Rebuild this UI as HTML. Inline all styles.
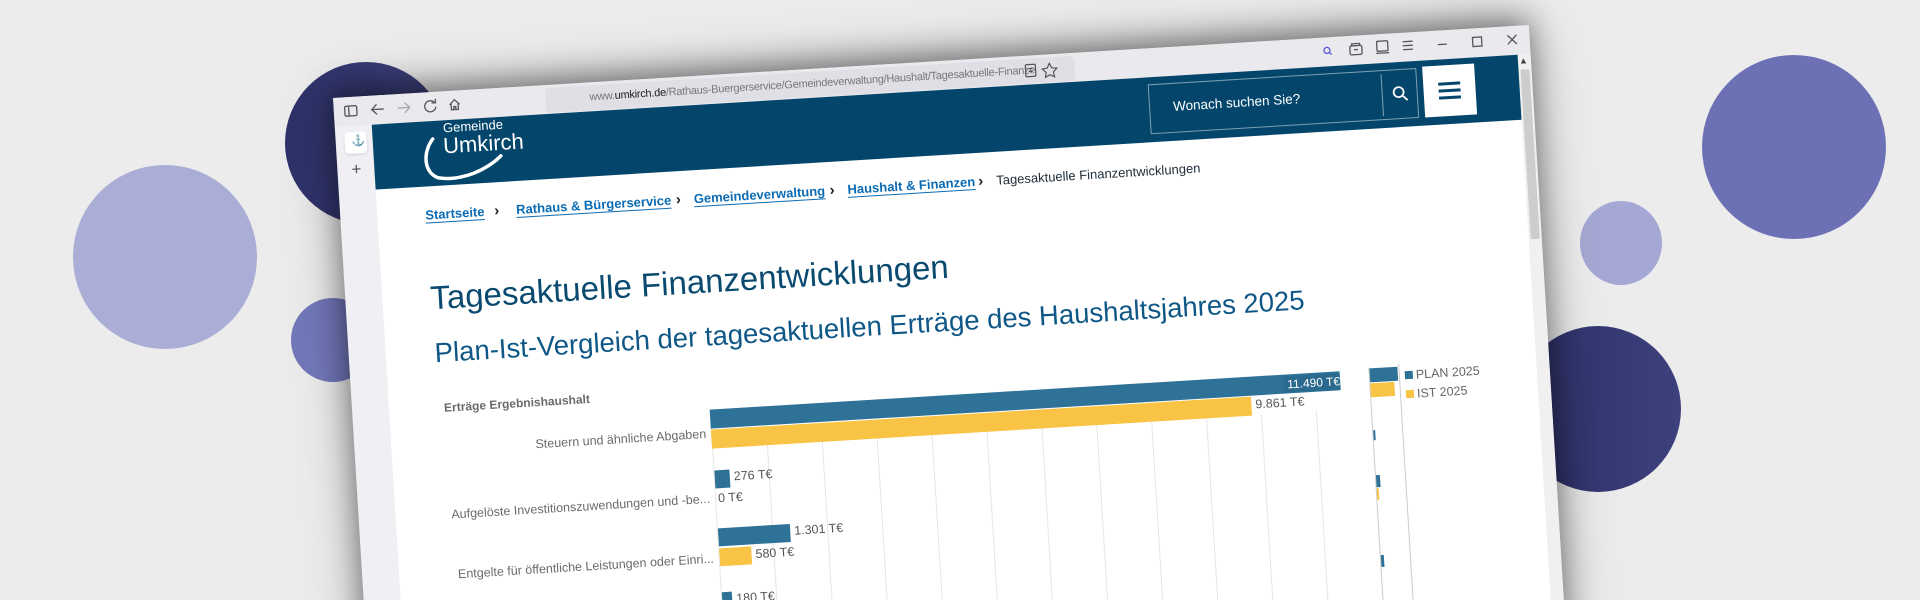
<!DOCTYPE html>
<html><head><meta charset="utf-8"><style>
*{margin:0;padding:0;box-sizing:border-box}
html{width:1920px;height:600px;overflow:hidden}
body{width:1920px;height:600px;overflow:hidden;background:#ececec;position:relative;font-family:"Liberation Sans",sans-serif}
#clip{position:absolute;left:0;top:0;width:1920px;height:600px;overflow:hidden}
.c{position:absolute;border-radius:50%}
#win{position:absolute;left:333px;top:98px;width:1198px;height:610px;transform-origin:0 0;transform:rotate(-3.49deg);background:#f0f0f4;box-shadow:0 -6px 30px rgba(0,0,0,.45),0 0 60px rgba(0,0,0,.25);overflow:hidden}
.a{position:absolute;white-space:nowrap}
.ic{position:absolute}
.bc{position:absolute;font-size:13px;font-weight:bold;color:#0b6cb4;text-decoration:underline;text-underline-offset:3px;white-space:nowrap}
.chev{position:absolute;font-size:15px;font-weight:bold;color:#222}
.lab{position:absolute;font-size:12.5px;color:#6a6a6a;white-space:nowrap;text-align:right}
.val{position:absolute;font-size:12.5px;color:#555;white-space:nowrap}
.bl{position:absolute;background:#2f7297}
.ye{position:absolute;background:#f9c445}
.g{position:absolute;width:1px;background:#e6e6e6;top:372px;height:400px}
</style></head><body>
<div id="clip">
<div class="c" style="left:73px;top:165px;width:184px;height:184px;background:#aaaed6"></div>
<div class="c" style="left:285px;top:62px;width:162px;height:162px;background:linear-gradient(90deg,#2e3168,#3f437f)"></div>
<div class="c" style="left:291px;top:298px;width:84px;height:84px;background:#7378ba"></div>
<div class="c" style="left:1702px;top:55px;width:184px;height:184px;background:#6c71b6"></div>
<div class="c" style="left:1580px;top:201px;width:82px;height:84px;background:#a5a8d4"></div>
<div class="c" style="left:1515px;top:326px;width:166px;height:166px;background:linear-gradient(90deg,#2e3168,#3c407c)"></div>

<div id="win">
  <div class="a" style="left:0;top:0;width:1198px;height:29px;background:#e9e9ee"></div>
  <svg class="ic" style="left:0;top:0" width="1198" height="29" fill="none" stroke="#555" stroke-width="1.3">
    <rect x="11" y="9" width="12" height="10" rx="1.5"/><line x1="15" y1="9" x2="15" y2="19"/>
    <path d="M50 14H38M43 9l-5 5 5 5"/>
    <path d="M64 14h12M71 9l5 5-5 5" stroke="#aaa"/>
    <path d="M101 11a5.5 5.5 0 1 0 1 4M102 7v4h-4"/>
    <path d="M116 14l5-5 5 5M117.5 13v6h7v-6M120 19v-3h2v3"/>
    <path d="M226 9l5-2 5 2v4c0 3-2.5 5-5 6-2.5-1-5-3-5-6z"/>
    <rect x="244" y="12" width="8" height="7" rx="1"/><path d="M245.5 12v-2a2.5 2.5 0 0 1 5 0v2"/>
    <circle cx="995" cy="13" r="3" stroke="#5a55d8"/><path d="M997 15l2.5 2.5" stroke="#5a55d8"/>
    <rect x="1018" y="10" width="12" height="9" rx="1.5"/><path d="M1020 10v-2h8v2M1022 14h4"/>
    <rect x="1045" y="7" width="11" height="10" rx="1"/><path d="M1044 19h13"/>
    <path d="M1071 9h10M1071 13h10M1071 17h10"/>
    <path d="M1106 14h9"/>
    <rect x="1141" y="9" width="9" height="9"/>
    <path d="M1176 9l9 9M1185 9l-9 9"/>
  </svg>
  <div class="a" style="left:212px;top:3px;width:530px;height:25px;background:#dfdfe5;border-radius:4px"></div>
  <div class="a" style="left:256px;top:9px;font-size:11px;color:#777;letter-spacing:-.25px">www.<span style="color:#222">umkirch.de</span>/Rathaus-Buergerservice/Gemeindeverwaltung/Haushalt/Tagesaktuelle-Finanze</div>
  <svg class="ic" style="left:690px;top:6px" width="50" height="20" fill="none" stroke="#555" stroke-width="1.2"><rect x="3" y="3" width="10" height="12" rx="1"/><path d="M6 7h4M6 10h4"/><path d="M27 3l2.3 4.6 5 .7-3.6 3.5.9 5-4.6-2.4-4.6 2.4.9-5-3.6-3.5 5-.7z"/></svg>

  <div class="a" style="left:9px;top:35px;width:22px;height:22px;background:#fff;border-radius:4px;box-shadow:0 1px 2px rgba(0,0,0,.15)"></div>
  <div class="a" style="left:16px;top:38px;font-size:11px;color:#5b8fd8">⚓</div>
  <div class="a" style="left:14px;top:63px;font-size:17px;color:#555">+</div>

  <div class="a" style="left:37px;top:29px;width:1148px;height:740px;background:#fff"></div>
  <div class="a" style="left:1185px;top:29px;width:13px;height:740px;background:#f0f0f0"></div>
  <div class="a" style="left:1187px;top:44px;width:9px;height:170px;background:#cdcdcd;border-radius:2px"></div>
  <div class="a" style="left:1186px;top:30px;font-size:9px;color:#444">▲</div>

  <div class="a" style="left:37px;top:29px;width:1148px;height:65px;background:#04466b"></div>
  <div class="a" style="left:108px;top:29px;font-size:13px;color:#fff">Gemeinde</div>
  <div class="a" style="left:107px;top:42px;font-size:22px;color:#fff">Umkirch</div>
  <svg class="ic" style="left:0;top:0" width="200" height="100"><path d="M97 47C86 60 86 80 100 86C122 91 148 82 164 68" fill="none" stroke="#fff" stroke-width="3.5" stroke-linecap="round" stroke-dasharray="6 1.5"/></svg>
  <div class="a" style="left:814px;top:36px;width:269px;height:50px;border:1px solid #7f9fb4"></div>
  <div class="a" style="left:1047px;top:40px;width:1px;height:42px;background:#7f9fb4"></div>
  <div class="a" style="left:838px;top:52px;font-size:13.5px;color:#fff">Wonach suchen Sie?</div>
  <svg class="ic" style="left:1056px;top:51px" width="20" height="20" fill="none" stroke="#fff" stroke-width="1.8"><circle cx="8" cy="8" r="5"/><path d="M12 12l4.5 4.5"/></svg>
  <div class="a" style="left:1089px;top:35px;width:52px;height:51px;background:#fff"></div>
  <div class="a" style="left:1104px;top:52px;width:22px;height:3px;background:#04466b"></div>
  <div class="a" style="left:1104px;top:59px;width:22px;height:3px;background:#04466b"></div>
  <div class="a" style="left:1104px;top:66px;width:22px;height:3px;background:#04466b"></div>

  <div class="bc" style="left:85px;top:115px">Startseite</div>
  <div class="chev" style="left:154px;top:114px">›</div>
  <div class="bc" style="left:176px;top:115px">Rathaus &amp; Bürgerservice</div>
  <div class="chev" style="left:336px;top:114px">›</div>
  <div class="bc" style="left:354px;top:115px">Gemeindeverwaltung</div>
  <div class="chev" style="left:490px;top:114px">›</div>
  <div class="bc" style="left:508px;top:115px">Haushalt &amp; Finanzen</div>
  <div class="chev" style="left:639px;top:114px">›</div>
  <div class="a" style="left:657px;top:115px;font-size:13px;color:#1e2b38">Tagesaktuelle Finanzentwicklungen</div>

  <div class="a" style="left:85px;top:187px;font-size:33px;color:#0b4a70">Tagesaktuelle Finanzentwicklungen</div>
  <div class="a" style="left:86px;top:245px;font-size:27.5px;color:#0e5786">Plan-Ist-Vergleich der tagesaktuellen Erträge des Haushaltsjahres 2025</div>

  <div class="a" style="left:92px;top:309px;font-size:12px;font-weight:bold;color:#6a6a6a">Erträge Ergebnishaushalt</div>
  <div class="g" style="left:357px;top:334px"></div>
  <div class="g" style="left:412px"></div><div class="g" style="left:467px"></div><div class="g" style="left:522px"></div>
  <div class="g" style="left:577px"></div><div class="g" style="left:632px"></div><div class="g" style="left:687px"></div>
  <div class="g" style="left:742px"></div><div class="g" style="left:797px"></div><div class="g" style="left:852px"></div>
  <div class="g" style="left:907px"></div><div class="g" style="left:962px"></div>
  <div class="a" style="left:1017px;top:332px;width:1px;height:440px;background:#ccc"></div>
  <div class="a" style="left:1047px;top:330px;width:1px;height:440px;background:#ccc"></div>

  <div class="bl" style="left:357px;top:334px;width:631px;height:19px"></div>
  <div class="a" style="left:932px;top:336px;width:56px;height:16px;background:#2a6a8e;color:#fff;font-size:12px;padding-left:3px;line-height:16px">11.490 T€</div>
  <div class="ye" style="left:357px;top:354px;width:541px;height:19px"></div>
  <div class="val" style="left:902px;top:355px">9.861 T€</div>
  <div class="lab" style="left:140px;width:212px;top:351px">Steuern und ähnliche Abgaben</div>

  <div class="bl" style="left:358px;top:395px;width:15px;height:18px"></div>
  <div class="val" style="left:377px;top:395px">276 T€</div>
  <div class="val" style="left:360px;top:416px">0 T€</div>
  <div class="lab" style="left:60px;width:292px;top:416px">Aufgelöste Investitionszuwendungen und -be...</div>

  <div class="bl" style="left:358px;top:453px;width:72px;height:18px"></div>
  <div class="val" style="left:434px;top:453px">1.301 T€</div>
  <div class="ye" style="left:358px;top:473px;width:32px;height:18px"></div>
  <div class="val" style="left:394px;top:474px">580 T€</div>
  <div class="lab" style="left:60px;width:292px;top:476px">Entgelte für öffentliche Leistungen oder Einri...</div>

  <div class="bl" style="left:358px;top:517px;width:10px;height:18px"></div>
  <div class="val" style="left:372px;top:517px">180 T€</div>

  <div class="bl" style="left:1018px;top:333px;width:28px;height:14px"></div>
  <div class="ye" style="left:1018px;top:348px;width:24px;height:14px"></div>
  <div class="bl" style="left:1018px;top:395px;width:2px;height:10px"></div>
  <div class="bl" style="left:1018px;top:440px;width:4px;height:12px"></div>
  <div class="ye" style="left:1018px;top:453px;width:2px;height:12px"></div>
  <div class="bl" style="left:1018px;top:520px;width:3px;height:12px"></div>
  <div class="bl" style="left:1053px;top:338px;width:8px;height:8px"></div>
  <div class="a" style="left:1064px;top:335px;font-size:12.5px;color:#666">PLAN 2025</div>
  <div class="ye" style="left:1053px;top:357px;width:8px;height:8px"></div>
  <div class="a" style="left:1064px;top:354px;font-size:12.5px;color:#666">IST 2025</div>
</div>
</div>
</body></html>
